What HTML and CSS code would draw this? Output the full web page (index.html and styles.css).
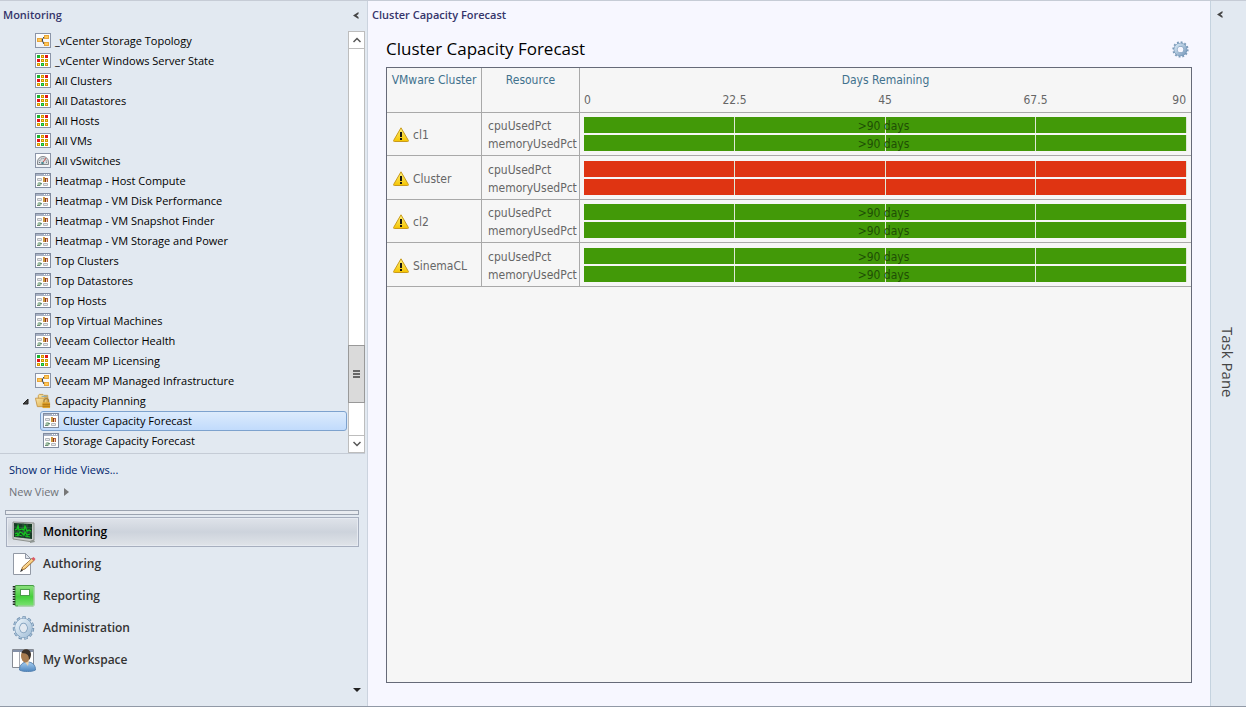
FILE: index.html
```html
<!DOCTYPE html>
<html lang="en">
<head>
<meta charset="utf-8">
<title>Cluster Capacity Forecast</title>
<link rel="stylesheet" href="styles.css">
</head>
<body>
<svg class="defs" aria-hidden="true">
  <defs>
    <linearGradient id="g-frame" x2="0" y2="1"><stop offset="0" stop-color="#fff"/><stop offset="1" stop-color="#eef1f6"/></linearGradient>
    <linearGradient id="g-warn" x2="0" y2="1"><stop offset="0" stop-color="#fff27a"/><stop offset="1" stop-color="#f5c400"/></linearGradient>
    <linearGradient id="g-folder" x2="1" y2="1"><stop offset="0" stop-color="#fbe7ac"/><stop offset="1" stop-color="#dcae4a"/></linearGradient>
    <linearGradient id="g-gear" x2="1" y2="1"><stop offset="0" stop-color="#d3e4f2"/><stop offset="1" stop-color="#7f9fc0"/></linearGradient>
    <linearGradient id="g-cog" x2="1" y2="1"><stop offset="0" stop-color="#e6f0f8"/><stop offset="1" stop-color="#a9c3da"/></linearGradient>
    <linearGradient id="g-book" x2="0" y2="1"><stop offset="0" stop-color="#8de07f"/><stop offset=".55" stop-color="#45cf3c"/><stop offset="1" stop-color="#7be372"/></linearGradient>
    <linearGradient id="g-person" x2="0" y2="1"><stop offset="0" stop-color="#a6cdf0"/><stop offset="1" stop-color="#4e86bf"/></linearGradient>
    <symbol id="i-topology" viewBox="0 0 16 16">
      <rect x=".5" y=".5" width="15" height="14" fill="url(#g-frame)" stroke="#8b95a8"/>
      <path d="M6 7h2M11 4H9L7 7l2 4h2" fill="none" stroke="#2b2b2b"/>
      <g fill="#ffc95c" stroke="#e8a63a"><rect x="2.500" y="5.500" width="4" height="3"/><rect x="9.500" y="2.500" width="4" height="3"/><rect x="9.500" y="9.500" width="4" height="3"/></g>
    </symbol>
    <symbol id="i-state" viewBox="0 0 16 16">
      <rect x=".5" y=".5" width="15" height="14" fill="#fff" stroke="#8b95a8"/>
      <path d="M2 2h3v3H2zM6 10h3v3H6z" fill="#18b52c"/><path d="M10 2h3v3h-3zM2 6h3v3H2z" fill="#e31515"/>
      <path d="M6 2h3v3H6zM6 6h3v3H6zM10 6h3v3h-3zM2 10h3v3H2zM10 10h3v3h-3z" fill="#cf9400"/>
      <path d="M7 3h1v1H7zM7 7h1v1H7zM11 7h1v1h-1zM3 11h1v1H3zM11 11h1v1h-1z" fill="#ffe34a"/>
      <path d="M7 11h1v1H7z" fill="#68e070"/>
    </symbol>
    <symbol id="i-gauge" viewBox="0 0 16 16">
      <rect x=".5" y=".5" width="15" height="14" fill="url(#g-frame)" stroke="#8b95a8"/>
      <path d="M2.500 11.500V9a5.500 5.500 0 0 1 11 0v2.500z" fill="#d9dcdf" stroke="#85898e"/>
      <path d="M4.500 10V9a3.500 3.500 0 0 1 7 0v1" fill="none" stroke="#66727c" stroke-dasharray="1 1"/>
      <path d="M7.500 10 11 5" stroke="#d0524c"/><circle cx="7.500" cy="10" r="1.300" fill="#4d8a92"/>
    </symbol>
    <symbol id="i-dash" viewBox="0 0 16 16">
      <rect x=".5" y=".5" width="15" height="14" fill="#fff" stroke="#808b9f"/>
      <path d="M1 1h14v2H1z" fill="#a8b2c4"/><path d="M9 1h1v1H9zM11 1h1v1h-1zM13 1h1v1h-1z" fill="#fff"/>
      <path d="M2.500 5.500h4v2h-4zM8.500 10.500h4v2h-4z" fill="#eee" stroke="#b5b8bd"/>
      <path d="M8 4h2v5H8z" fill="#c9973c"/><path d="M10 5h1v4h-1z" fill="#8a3420"/><path d="M11 5h2v4h-2z" fill="#b9623f"/><path d="M11 6h1v3h-1z" fill="#f0cfae"/>
      <ellipse cx="4.500" cy="11" rx="2.200" ry="1.900" fill="#9dbca1"/><path d="M2 12h3v1H2zM5 10h2v1H5z" fill="#6c8f73"/>
    </symbol>
    <symbol id="i-folder" viewBox="0 0 17 17">
      <path d="M3.500 13.500v-11l1-1h4l1 1h4v8" fill="#f6dc97" stroke="#c99d4c"/><path d="M7 3h6v1H7z" fill="#6ba0c8"/>
      <path d="M.5 5.500h9l1-1h3l-1.500 10H2.500z" fill="url(#g-folder)" stroke="#c9994a"/>
      <path d="M9.500 10V8.500a2.500 2.500 0 0 1 5 0V10" fill="none" stroke="#a8823c" stroke-width="1.400"/>
      <path d="M8 10h8v6H8z" fill="#e2a52c"/><path d="M8 12h8M8 14h8" stroke="#a76e10"/>
    </symbol>
    <symbol id="i-warn" viewBox="0 0 16 16">
      <path d="M8 .8 15.400 13.500a.8.800 0 0 1-.8 1H1.400a.8.800 0 0 1-.8-1z" fill="url(#g-warn)" stroke="#c99a1c"/>
      <path d="M7 5h2v5H7zM7 11h2v2H7z" fill="#1c1a12"/>
    </symbol>
    <symbol id="i-gear" viewBox="0 0 24 24">
      <circle cx="12" cy="12" r="10" fill="none" stroke="#7d9cba" stroke-width="3" stroke-dasharray="2.600 2.636"/>
      <circle cx="12" cy="12" r="6.700" fill="none" stroke="#6e90b2" stroke-width="6"/>
      <circle cx="12" cy="12" r="6.700" fill="none" stroke="url(#g-gear)" stroke-width="4.500"/>
      <circle cx="12" cy="12" r="4" fill="#f7f7ff"/>
    </symbol>
    <symbol id="i-cog" viewBox="0 0 24 24">
      <ellipse cx="11.500" cy="12" rx="9" ry="10" fill="none" stroke="#6687a8" stroke-width="3.400" stroke-dasharray="3.200 2.230"/>
      <ellipse cx="11.500" cy="12" rx="9" ry="10" fill="none" stroke="#b4cce0" stroke-width="2" stroke-dasharray="2.400 3.030" stroke-dashoffset="-.4"/>
      <ellipse cx="11.500" cy="12" rx="6.300" ry="7.300" fill="none" stroke="#6f92b3" stroke-width="5.500"/>
      <ellipse cx="11.500" cy="12" rx="6.300" ry="7.300" fill="none" stroke="url(#g-cog)" stroke-width="4.300"/>
    </symbol>
    <symbol id="i-monitor" viewBox="0 0 24 24">
      <path d="M1 2l21 1v17l-4 1.500L1 19z" fill="#c8cbc8" stroke="#8d918e"/><path d="M2 3l18 1v15L2 17z" fill="#173b26"/>
      <path d="M2 7l18 1M2 12h18M6 3v14M11 3v15M15 4v14" stroke="#3c6a4c" stroke-width=".7"/>
      <path d="M3 10l2-1 1-3 1 4 3-1 2 1 1-4 2 5 2-1 2 1M3 14l2-1 1 2 2-3 2 1 2 2 1-3 2 3 3-1" fill="none" stroke="#14c91f" stroke-width="1.300"/>
      <path d="M3 16l4-1 3 1M13 16l5 1" stroke="#14c91f" fill="none"/>
      <path d="M18 21l4-1 1 2-5 1z" fill="#8f9693"/>
    </symbol>
    <symbol id="i-author" viewBox="0 0 24 24">
      <path d="M1.500 1.500h12l5 5v16h-17z" fill="#fff" stroke="#9299a5"/><path d="M13.500 1.500v5h5z" fill="#dfe4ec" stroke="#9299a5"/>
      <path d="M9.500 18l1-3L20 6.500l2 2-9 8.500z" fill="#f6c878" stroke="#8b5b21" stroke-width=".8"/><path d="M11 16l9-8.500" stroke="#ffe6ac"/>
      <path d="M19.500 6.500l2-1.500 2 2-1.500 2z" fill="#dc5965"/><path d="M8 20l1.300-3 1.700 1.700z" fill="#333"/>
    </symbol>
    <symbol id="i-report" viewBox="0 0 24 24">
      <rect x="3" y="1.500" width="19" height="20.500" rx="1" fill="url(#g-book)" stroke="#459c44"/>
      <rect x="8.500" y="5.500" width="9" height="6" fill="#fff" stroke="#4d9b4b"/>
      <path d="M2 2v20" stroke="#232c23" stroke-width="2.500" stroke-dasharray="1.500 1"/><path d="M22 3v19H6" fill="none" stroke="#c5e4c5"/>
    </symbol>
    <symbol id="i-work" viewBox="0 0 24 24">
      <path d="M.5 1.500h21v18H.5z" fill="#fff" stroke="#868b94"/><path d="M1 2h20v2H1z" fill="#8390a8"/><path d="M7.500 4v15" stroke="#a6a9b0"/>
      <path d="M7.500 22c0-5 3-8 8-8 5 0 8 3 8 8-4 2-12 2-16 0z" fill="url(#g-person)" stroke="#5884b1"/>
      <path d="M12 13h5l-1 5z" fill="#e8d1b0"/><ellipse cx="13.500" cy="8" rx="4.500" ry="6.500" fill="#a87c50"/>
      <path d="M9.500 5c1-5 9-5 9.500 1 0 3-1 5-2 6 0-4-1-7-7.500-7z" fill="#3b3129"/>
    </symbol>
  </defs>
</svg>
<div class="app">
  <aside class="nav">
    <header class="nav-head"><h2 class="pane-title">Monitoring</h2>
      <button class="collapse" aria-label="Collapse navigation"><svg width="6" height="7" viewBox="0 0 6 7"><path d="M5.500 0v2L3.500 3.500l2 1.500v2L0 3.500z" fill="#444"/></svg></button></header>
    <div class="tree-wrap">
      <ul class="tree">
        <li><button class="node"><svg class="ic"><use href="#i-topology"/></svg>_vCenter Storage Topology</button></li>
        <li><button class="node"><svg class="ic"><use href="#i-state"/></svg>_vCenter Windows Server State</button></li>
        <li><button class="node"><svg class="ic"><use href="#i-state"/></svg>All Clusters</button></li>
        <li><button class="node"><svg class="ic"><use href="#i-state"/></svg>All Datastores</button></li>
        <li><button class="node"><svg class="ic"><use href="#i-state"/></svg>All Hosts</button></li>
        <li><button class="node"><svg class="ic"><use href="#i-state"/></svg>All VMs</button></li>
        <li><button class="node"><svg class="ic"><use href="#i-gauge"/></svg>All vSwitches</button></li>
        <li><button class="node"><svg class="ic"><use href="#i-dash"/></svg>Heatmap - Host Compute</button></li>
        <li><button class="node"><svg class="ic"><use href="#i-dash"/></svg>Heatmap - VM Disk Performance</button></li>
        <li><button class="node"><svg class="ic"><use href="#i-dash"/></svg>Heatmap - VM Snapshot Finder</button></li>
        <li><button class="node"><svg class="ic"><use href="#i-dash"/></svg>Heatmap - VM Storage and Power</button></li>
        <li><button class="node"><svg class="ic"><use href="#i-dash"/></svg>Top Clusters</button></li>
        <li><button class="node"><svg class="ic"><use href="#i-dash"/></svg>Top Datastores</button></li>
        <li><button class="node"><svg class="ic"><use href="#i-dash"/></svg>Top Hosts</button></li>
        <li><button class="node"><svg class="ic"><use href="#i-dash"/></svg>Top Virtual Machines</button></li>
        <li><button class="node"><svg class="ic"><use href="#i-dash"/></svg>Veeam Collector Health</button></li>
        <li><button class="node"><svg class="ic"><use href="#i-state"/></svg>Veeam MP Licensing</button></li>
        <li><button class="node"><svg class="ic"><use href="#i-topology"/></svg>Veeam MP Managed Infrastructure</button></li>
        <li><button class="node parent"><svg class="twisty" viewBox="0 0 7 7"><path d="M6 1v5H1z" fill="#444" stroke="#222"/></svg><svg class="ic"><use href="#i-folder"/></svg>Capacity Planning</button>
          <ul class="subtree">
            <li><button class="node selected"><svg class="ic"><use href="#i-dash"/></svg>Cluster Capacity Forecast</button></li>
            <li><button class="node"><svg class="ic"><use href="#i-dash"/></svg>Storage Capacity Forecast</button></li>
          </ul>
        </li>
      </ul>
      <div class="scroll">
        <button class="scroll-btn" aria-label="Scroll up"><svg width="8" height="6" viewBox="0 0 8 6"><path d="M.5 5 4 1.500 7.500 5" fill="none" stroke="#555" stroke-width="1.500"/></svg></button>
        <div class="track"><div class="thumb"><i></i><i></i><i></i></div></div>
        <button class="scroll-btn" aria-label="Scroll down"><svg width="8" height="6" viewBox="0 0 8 6"><path d="M.5 1 4 4.500 7.500 1" fill="none" stroke="#555" stroke-width="1.500"/></svg></button>
      </div>
    </div>
    <div class="view-links">
      <a class="link" href="#views">Show or Hide Views...</a>
      <button class="new-view">New View <svg width="5" height="8" viewBox="0 0 5 8"><path d="M0 0l5 4-5 4z" fill="#777"/></svg></button>
    </div>
    <div class="splitter"></div>
    <nav class="wunderbar">
      <button class="space current"><svg class="big"><use href="#i-monitor"/></svg>Monitoring</button>
      <button class="space"><svg class="big"><use href="#i-author"/></svg>Authoring</button>
      <button class="space"><svg class="big"><use href="#i-report"/></svg>Reporting</button>
      <button class="space"><svg class="big"><use href="#i-cog"/></svg>Administration</button>
      <button class="space"><svg class="big"><use href="#i-work"/></svg>My Workspace</button>
    </nav>
    <div class="nav-foot"><button class="more" aria-label="Configure buttons"><svg width="8" height="4" viewBox="0 0 8 4"><path d="M0 0h8L4 4z" fill="#222"/></svg></button></div>
  </aside>
  <main class="main">
    <h2 class="pane-title main-title">Cluster Capacity Forecast</h2>
    <section class="widget">
      <header class="widget-head"><h1>Cluster Capacity Forecast</h1><button class="settings" aria-label="Settings"><svg class="ic-gear"><use href="#i-gear"/></svg></button></header>
      <div class="panel">
        <table class="forecast">
          <colgroup><col class="c-name"><col class="c-res"><col></colgroup>
          <thead><tr><th>VMware Cluster</th><th>Resource</th><th>Days Remaining
            <div class="axis"><span>0</span><span>22.5</span><span>45</span><span>67.5</span><span>90</span></div></th></tr></thead>
          <tbody>
            <tr><td><div class="cluster"><svg class="ic-warn"><use href="#i-warn"/></svg>cl1</div></td><td><div class="res"><span>cpuUsedPct</span><span>memoryUsedPct</span></div></td>
              <td><div class="bars"><div class="bar ok"><i></i><i></i><i></i><i></i><b>&gt;90 days</b></div><div class="bar ok"><i></i><i></i><i></i><i></i><b>&gt;90 days</b></div></div></td></tr>
            <tr><td><div class="cluster"><svg class="ic-warn"><use href="#i-warn"/></svg>Cluster</div></td><td><div class="res"><span>cpuUsedPct</span><span>memoryUsedPct</span></div></td>
              <td><div class="bars"><div class="bar bad"><i></i><i></i><i></i><i></i></div><div class="bar bad"><i></i><i></i><i></i><i></i></div></div></td></tr>
            <tr><td><div class="cluster"><svg class="ic-warn"><use href="#i-warn"/></svg>cl2</div></td><td><div class="res"><span>cpuUsedPct</span><span>memoryUsedPct</span></div></td>
              <td><div class="bars"><div class="bar ok"><i></i><i></i><i></i><i></i><b>&gt;90 days</b></div><div class="bar ok"><i></i><i></i><i></i><i></i><b>&gt;90 days</b></div></div></td></tr>
            <tr><td><div class="cluster"><svg class="ic-warn"><use href="#i-warn"/></svg>SinemaCL</div></td><td><div class="res"><span>cpuUsedPct</span><span>memoryUsedPct</span></div></td>
              <td><div class="bars"><div class="bar ok"><i></i><i></i><i></i><i></i><b>&gt;90 days</b></div><div class="bar ok"><i></i><i></i><i></i><i></i><b>&gt;90 days</b></div></div></td></tr>
          </tbody>
        </table>
      </div>
    </section>
  </main>
  <aside class="tasks">
    <button class="collapse" aria-label="Expand task pane"><svg width="6" height="7" viewBox="0 0 6 7"><path d="M5.500 0v2L3.500 3.500l2 1.500v2L0 3.500z" fill="#444"/></svg></button>
    <span class="tasks-label">Task Pane</span>
  </aside>
</div>
</body>
</html>
```
FILE: styles.css
```css
* { box-sizing: border-box; }
body { margin: 0; font: 11px/20px "Open Sans", "Noto Sans", sans-serif; color: #000; }
button { margin: 0; padding: 0; border: 0; background: none; font: inherit; color: inherit; text-align: left; }
ul { list-style: none; margin: 0; padding: 0; }
h1, h2 { margin: 0; }
svg { display: block; flex: none; }
.defs { position: absolute; width: 0; height: 0; }

.app { display: flex; min-height: 100vh; border-top: 1px solid #c6ccd6; border-bottom: 1px solid #9199a6; background: #f7f7ff; }
.pane-title { font-size: 11px; font-weight: 600; line-height: 28px; color: #35356b; }

/* Navigation pane */
.nav { display: flex; flex-direction: column; flex: none; width: 368px; background: #e2e9f1; border-right: 1px solid #cbd3de; }
.nav-head { display: flex; justify-content: space-between; align-items: center; height: 30px; padding: 0 8px 2px 3px; }
.tree-wrap { display: flex; border-bottom: 1px solid #c5ccd6; margin-right: 2px; }
.tree { flex: 1; min-width: 0; }
.node { display: flex; align-items: center; gap: 4px; width: 100%; height: 20px; padding-left: 35px; white-space: nowrap; }
.node.parent { padding-left: 22px; }
.twisty { width: 7px; height: 7px; margin-right: 2px; }
.ic { width: 16px; height: 16px; }
.subtree { padding: 0 1px 2px 40px; }
.subtree .node { padding-left: 3px; }
.subtree .selected { padding-left: 2px; border: 1px solid #7da2ce; border-radius: 3px; background: linear-gradient(#dcebfc, #c1dbfc); }
.scroll { display: flex; flex-direction: column; width: 17px; border: 1px solid #bdbdbd; background: #fff; }
.scroll-btn { display: grid; place-items: center; height: 16px; }
.track { display: flex; flex-direction: column; justify-content: flex-end; flex: 1; padding-bottom: 32px; border: solid #bdbdbd; border-width: 1px 0; }
.thumb { display: flex; flex-direction: column; align-items: center; justify-content: center; gap: 1px; height: 58px; margin: 0 -1px; border: 1px solid #999; background: #dadada; }
.thumb i { width: 7px; height: 2px; background: #666; }
.view-links { display: flex; flex-direction: column; align-items: flex-start; gap: 2px; padding: 6px 9px 8px; }
.link { color: #00246b; text-decoration: none; }
.new-view { display: flex; align-items: center; gap: 5px; color: #6f7278; }
.splitter { height: 5px; margin: 0 8px 2px 5px; border: 1px solid #9ba3b0; background: #e8ebf0; }
.wunderbar { display: flex; flex-direction: column; padding: 0 8px 0 6px; }
.space { display: flex; align-items: center; gap: 7px; height: 32px; padding-left: 6px; font-size: 12px; font-weight: 600; color: #333; }
.current { height: 30px; margin-bottom: 1px; color: #000; padding-left: 5px; border: 1px solid #a7afbf; outline: 1px solid #e6eaf1; outline-offset: -2px; background: linear-gradient(#dfe3ea, #cdd3dc 50%, #e0e4e9); }
.big { width: 24px; height: 24px; }
.nav-foot { display: flex; justify-content: flex-end; align-items: flex-end; flex: 1; padding: 0 6px 14px; }

/* Main pane */
.main { display: flex; flex-direction: column; flex: 1; min-width: 0; padding: 0 18px 23px 4px; }
.widget { display: flex; flex-direction: column; flex: 1; padding-left: 14px; }
.widget-head { display: flex; align-items: center; justify-content: space-between; height: 38px; padding: 2px 3px 0 0; }
h1 { font-size: 17px; font-weight: 400; line-height: 24px; }
.ic-gear { width: 17px; height: 17px; }
.panel { flex: 1; border: 1px solid #666a78; background: #f6f6f6; font-family: Tahoma, "DejaVu Sans Condensed", "Open Sans", sans-serif; font-size: 12px; line-height: 18px; color: #666; }
.forecast { width: 100%; table-layout: fixed; border-collapse: separate; border-spacing: 0; }
.c-name { width: 95px; }
.c-res { width: 98px; }
th, td { padding: 0; border: solid #a9a9a9; border-width: 0 1px 1px 0; vertical-align: top; }
th:last-child, td:last-child { border-right: 0; }
th { padding-top: 3px; font-weight: 400; color: #41718d; text-align: center; white-space: nowrap; }
.axis { display: grid; grid-template-columns: repeat(8, minmax(0, 1fr)); padding: 2px 5px 3px 4px; color: #666; }
.axis span { grid-column: span 2; }
.axis span:first-child { grid-column: span 1; text-align: left; }
.axis span:last-child { grid-column: span 1; text-align: right; }
td { vertical-align: middle; }
.cluster { display: flex; align-items: center; gap: 4px; padding: 2px 0 0 6px; }
.ic-warn { width: 16px; height: 16px; }
.res { display: flex; flex-direction: column; padding: 2px 0 0 6px; }
.bars { display: flex; flex-direction: column; gap: 2px; padding: 4px; }
tr:nth-child(even) .bars { padding-top: 5px; }
.bar { position: relative; display: flex; height: 16px; }
.bar i { flex: 1; border-right: 1px solid #dfe8d8; }
.ok { background: #429908; }
.bad { background: #df3412; }
.bar b { position: absolute; inset: 0; padding-right: 4px; font-weight: 400; line-height: 18px; text-align: center; color: #1f4f05; }

/* Task pane */
.tasks { display: flex; flex-direction: column; align-items: center; flex: none; width: 36px; padding-right: 2px; border-left: 1px solid #c5d3df; background: #e2e9f1; }
.tasks .collapse { align-self: flex-start; padding: 10px 0 0 6px; }
.tasks-label { flex: 1; display: flex; align-items: center; justify-content: center; writing-mode: vertical-rl; font-size: 15px; color: #444; }
```
